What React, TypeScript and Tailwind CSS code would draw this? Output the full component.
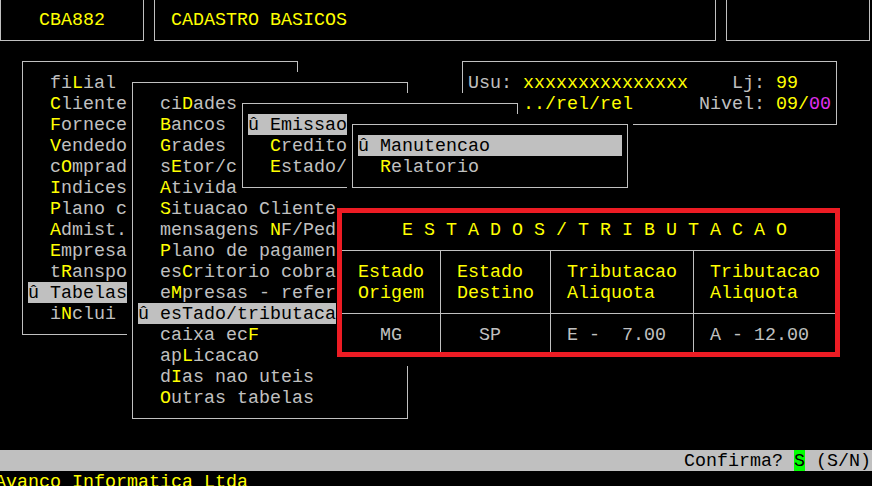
import type { CSSProperties, ReactNode } from "react";

// terminal cell grid: 11px wide, 21px tall, col 0 starts at x=6, row 0 at y=9
const CW = 11;
const RH = 21;

const at = (c1: number, r1: number, c2: number, r2: number): CSSProperties => ({
  left: 6 + c1 * CW,
  top: 9 + r1 * RH,
  width: (c2 - c1 + 1) * CW,
  height: (r2 - r1 + 1) * RH,
});

// "[X]" marks the yellow hotkey letter
const Hot = ({ s }: { s: string }) => (
  <>
    {s.split(/(\[.\])/).map((p, i) =>
      /^\[.\]$/.test(p) ? (
        <span key={i} className="text-[#ffff00]">
          {p[1]}
        </span>
      ) : (
        <span key={i}>{p}</span>
      )
    )}
  </>
);

const Line = ({ children, className = "" }: { children?: ReactNode; className?: string }) => (
  <div className={`h-[21px] leading-[24px] whitespace-pre ${className}`}>{children}</div>
);

const Sel = ({ text, className }: { text: string; className: string }) => (
  <Line>
    <span className={`inline-block h-[21px] align-top bg-[#c0c0c0] text-black ${className}`}>{text}</span>
  </Line>
);

const Frame = ({
  className = "",
  style,
  children,
}: {
  className?: string;
  style?: CSSProperties;
  children?: ReactNode;
}) => (
  <div className={`bg-black ${className}`} style={style}>
    <div className="absolute left-[5px] right-[5px] top-[10px] bottom-[10px] border border-[#c0c0c0]" />
    <div className="relative pl-[11px] pt-[21px]">{children}</div>
  </div>
);

const mainMenu = [
  "  fi[L]ial",
  "  [C]liente",
  "  [F]ornece",
  "  [V]endedo",
  "  c[O]mprad",
  "  [I]ndices",
  "  [P]lano c",
  "  [A]dmist.",
  "  [E]mpresa",
  "  t[R]anspo",
];

const tabelas = [
  "  ci[D]ades",
  "  [B]ancos",
  "  [G]rades",
  "  s[E]tor/c",
  "  [A]tivida",
  "  [S]ituacao Cliente",
  "  mensagens [N]F/Ped",
  "  [P]lano de pagamen",
  "  es[C]ritorio cobra",
  "  e[M]presas - refer",
];

const tabelasEnd = ["  caixa ec[F]", "  ap[L]icacao", "  d[I]as nao uteis", "  [O]utras tabelas"];

const HRow = () => (
  <div className="h-[21px] pt-[10px]">
    <div className="h-px bg-[#c0c0c0]" />
  </div>
);

const TCol = ({ w, lines }: { w: string; lines: string[] }) => (
  <div className={`flex flex-col ${w}`}>
    <HRow />
    <Line className="text-[#ffff00]">{lines[0]}</Line>
    <Line className="text-[#ffff00]">{lines[1]}</Line>
    <HRow />
    <Line>{lines[2]}</Line>
  </div>
);

const Sep = ({ w = "w-[11px]", v = true }: { w?: string; v?: boolean }) => (
  <div className={`relative ${w}`}>
    <div className="absolute left-0 right-0 top-[10px] h-px bg-[#c0c0c0]" />
    <div className="absolute left-0 right-0 top-[73px] h-px bg-[#c0c0c0]" />
    {v && <div className="absolute left-[5px] top-[10px] bottom-[-10px] w-px bg-[#c0c0c0]" />}
  </div>
);

export default function App() {
  return (
    <div className="relative w-[872px] h-[486px] overflow-hidden bg-black text-[#c0c0c0] font-['Liberation_Mono',monospace] text-[18.333px]">
      {/* screen base: header boxes and status lines */}
      <div className="-mt-[12px] -ml-[5px] w-[880px] flex flex-col">
        <div className="flex h-[63px]">
          <Frame className="relative w-[154px] h-[63px]">
            <Line className="text-[#ffff00]">{"   CBA882"}</Line>
          </Frame>
          <Frame className="relative w-[572px] h-[63px]">
            <Line className="text-[#ffff00]">{" CADASTRO BASICOS"}</Line>
          </Frame>
          <Frame className="relative w-[154px] h-[63px]" />
        </div>
        <div className="h-[399px]" />
        <div className="h-[21px] leading-[24px] bg-[#c0c0c0] text-black flex justify-end whitespace-pre pr-[4px]">
          <span>{"Confirma? "}</span>
          <span className="inline-block h-[21px] bg-[#00ff00]">S</span>
          <span>{" (S/N)"}</span>
        </div>
        <Line className="text-[#ffff00]">Avanco Informatica Ltda</Line>
      </div>

      {/* user box */}
      <Frame className="absolute" style={at(41, 2, 75, 5)}>
        <Line>
          Usu: <span className="text-[#ffff00]">xxxxxxxxxxxxxxx</span>
          {"    Lj: "}
          <span className="text-[#ffff00]">99</span>
        </Line>
        <Line>
          {"     "}
          <span className="text-[#ffff00]">../rel/rel</span>
          {"      Nivel: "}
          <span className="text-[#ffff00]">09/</span>
          <span className="text-[#e030f0]">00</span>
        </Line>
      </Frame>

      {/* main menu */}
      <Frame className="absolute" style={at(1, 2, 26, 15)}>
        {mainMenu.map((s) => (
          <Line key={s}>
            <Hot s={s} />
          </Line>
        ))}
        <Sel text="û Tabelas" className="w-[99px]" />
        <Line>
          <Hot s="  i[N]clui" />
        </Line>
      </Frame>

      {/* tabelas submenu */}
      <Frame className="absolute" style={at(11, 3, 36, 19)}>
        {tabelas.map((s) => (
          <Line key={s}>
            <Hot s={s} />
          </Line>
        ))}
        <Sel text="û esTado/tributaca" className="w-[198px]" />
        {tabelasEnd.map((s) => (
          <Line key={s}>
            <Hot s={s} />
          </Line>
        ))}
      </Frame>

      {/* estado/tributacao submenu */}
      <Frame className="absolute" style={at(21, 4, 46, 8)}>
        <Sel text="û Emissao" className="w-[99px]" />
        <Line>
          <Hot s="  [C]redito" />
        </Line>
        <Line>
          <Hot s="  [E]stado/" />
        </Line>
      </Frame>

      <Frame className="absolute" style={at(31, 5, 56, 8)}>
        <Sel text="û Manutencao" className="w-[264px]" />
        <Line>
          <Hot s="  [R]elatorio" />
        </Line>
      </Frame>

      {/* estados / tributacao table */}
      <Frame className="absolute" style={at(30, 9, 75, 16)}>
        <Line className="text-[#ffff00]">{"     E S T A D O S / T R I B U T A C A O"}</Line>
        <div className="flex -ml-[6px]">
          <Sep w="w-[6px]" v={false} />
          <TCol w="w-[88px]" lines={[" Estado", " Origem", "   MG"]} />
          <Sep />
          <TCol w="w-[99px]" lines={[" Estado", " Destino", "   SP"]} />
          <Sep />
          <TCol w="w-[132px]" lines={[" Tributacao", " Aliquota", " E -  7.00"]} />
          <Sep />
          <TCol w="w-[132px]" lines={[" Tributacao", " Aliquota", " A - 12.00"]} />
          <Sep w="w-[6px]" v={false} />
        </div>
      </Frame>

      {/* red highlight annotation */}
      <div className="absolute left-[337px] top-[208px] w-[503px] h-[149px] border-[5px] border-[#ed1c24] pointer-events-none" />
    </div>
  );
}
